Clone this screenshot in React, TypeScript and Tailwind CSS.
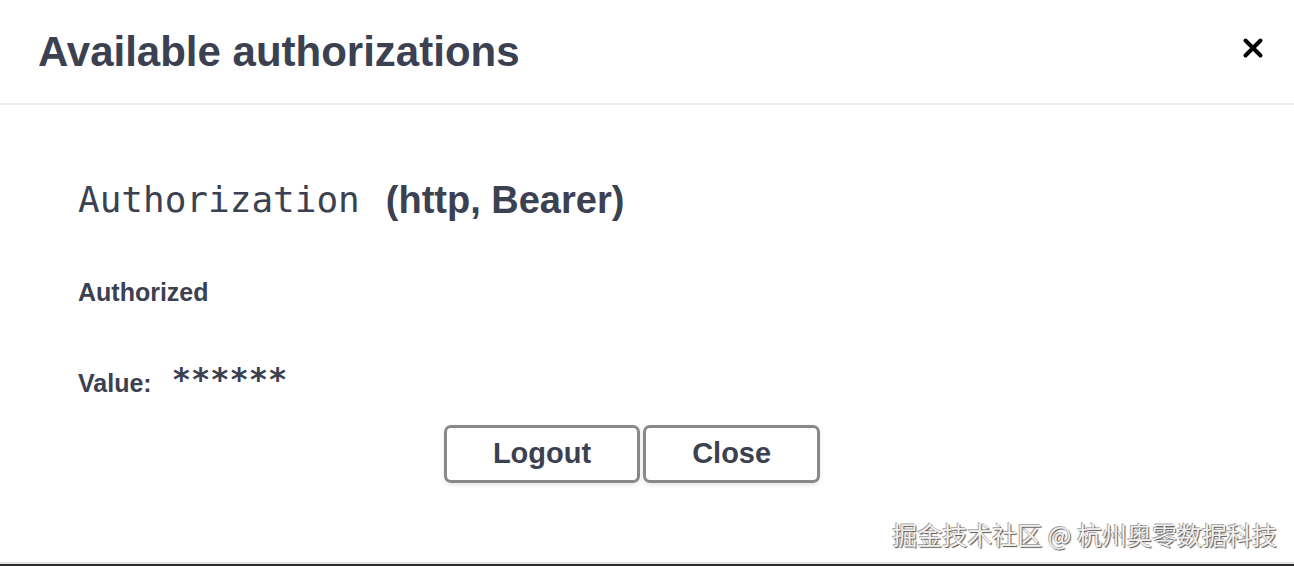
import React from "react";

const sans = "font-['Liberation_Sans',Arial,sans-serif]";
const mono = "font-['DejaVu_Sans_Mono','Liberation_Mono',monospace]";

export default function App() {
  return (
    <div className="w-[1294px] h-[566px] bg-white flex flex-col overflow-hidden text-[#3b4151]">
      <div className="h-[105px] shrink-0 flex items-center justify-between pl-[38px] pr-[30px] border-b-2 border-[#ebebeb]">
        <h3 className={`${sans} text-[42px] font-bold leading-none`}>Available authorizations</h3>
        <button className="w-[22px] h-[22px] flex items-center justify-center relative -top-[4px]">
          <svg width="22" height="22" viewBox="0 0 22 22">
            <path d="M3.5 3.5 L18.5 18.5 M18.5 3.5 L3.5 18.5" stroke="#000" strokeWidth="4" strokeLinecap="round" />
          </svg>
        </button>
      </div>
      <div className="flex-1 flex flex-col pl-[78px] pt-[71px]">
        <h4 className="h-[48px] flex items-center leading-[48px]">
          <span className={`${mono} text-[36px]`}>Authorization</span>
          <span className={`${sans} text-[38px] font-bold ml-[26px]`}>(http, Bearer)</span>
        </h4>
        <div className={`${sans} mt-[53px] h-[30px] leading-[30px] text-[25px] font-bold`}>Authorized</div>
        <div className="mt-[61px] h-[30px] flex items-center">
          <span className={`${sans} text-[25px] font-bold leading-[30px]`}>Value:</span>
          <span className={`${mono} text-[32px] font-bold leading-[30px] ml-[20px] relative -top-[4px]`}>******</span>
        </div>
        <div className="mt-[27px] flex justify-center gap-[3px] pr-[108px]">
          <button className={`${sans} h-[58px] px-[46px] border-[3px] border-[#888888] rounded-[7px] text-[29px] font-bold text-[#3b4151] shadow-[0_2px_4px_rgba(0,0,0,0.1)]`}>Logout</button>
          <button className={`${sans} h-[58px] px-[46px] border-[3px] border-[#888888] rounded-[7px] text-[29px] font-bold text-[#3b4151] shadow-[0_2px_4px_rgba(0,0,0,0.1)]`}>Close</button>
        </div>
        <div className="flex-1" />
        <div className="flex justify-end pr-[17px] pb-[13px]">
          <span className="font-['Noto_Sans_CJK_SC',sans-serif] text-[25px] leading-[30px] text-[#f0f0f0] [text-shadow:1px_1px_1px_#555,-1px_-1px_0_#aaa]">掘金技术社区 @ 杭州奥零数据科技</span>
        </div>
      </div>
      <div className="h-[4px] shrink-0 border-t-2 border-[#e4e4e4] bg-[#2e2e2e]" />
    </div>
  );
}
